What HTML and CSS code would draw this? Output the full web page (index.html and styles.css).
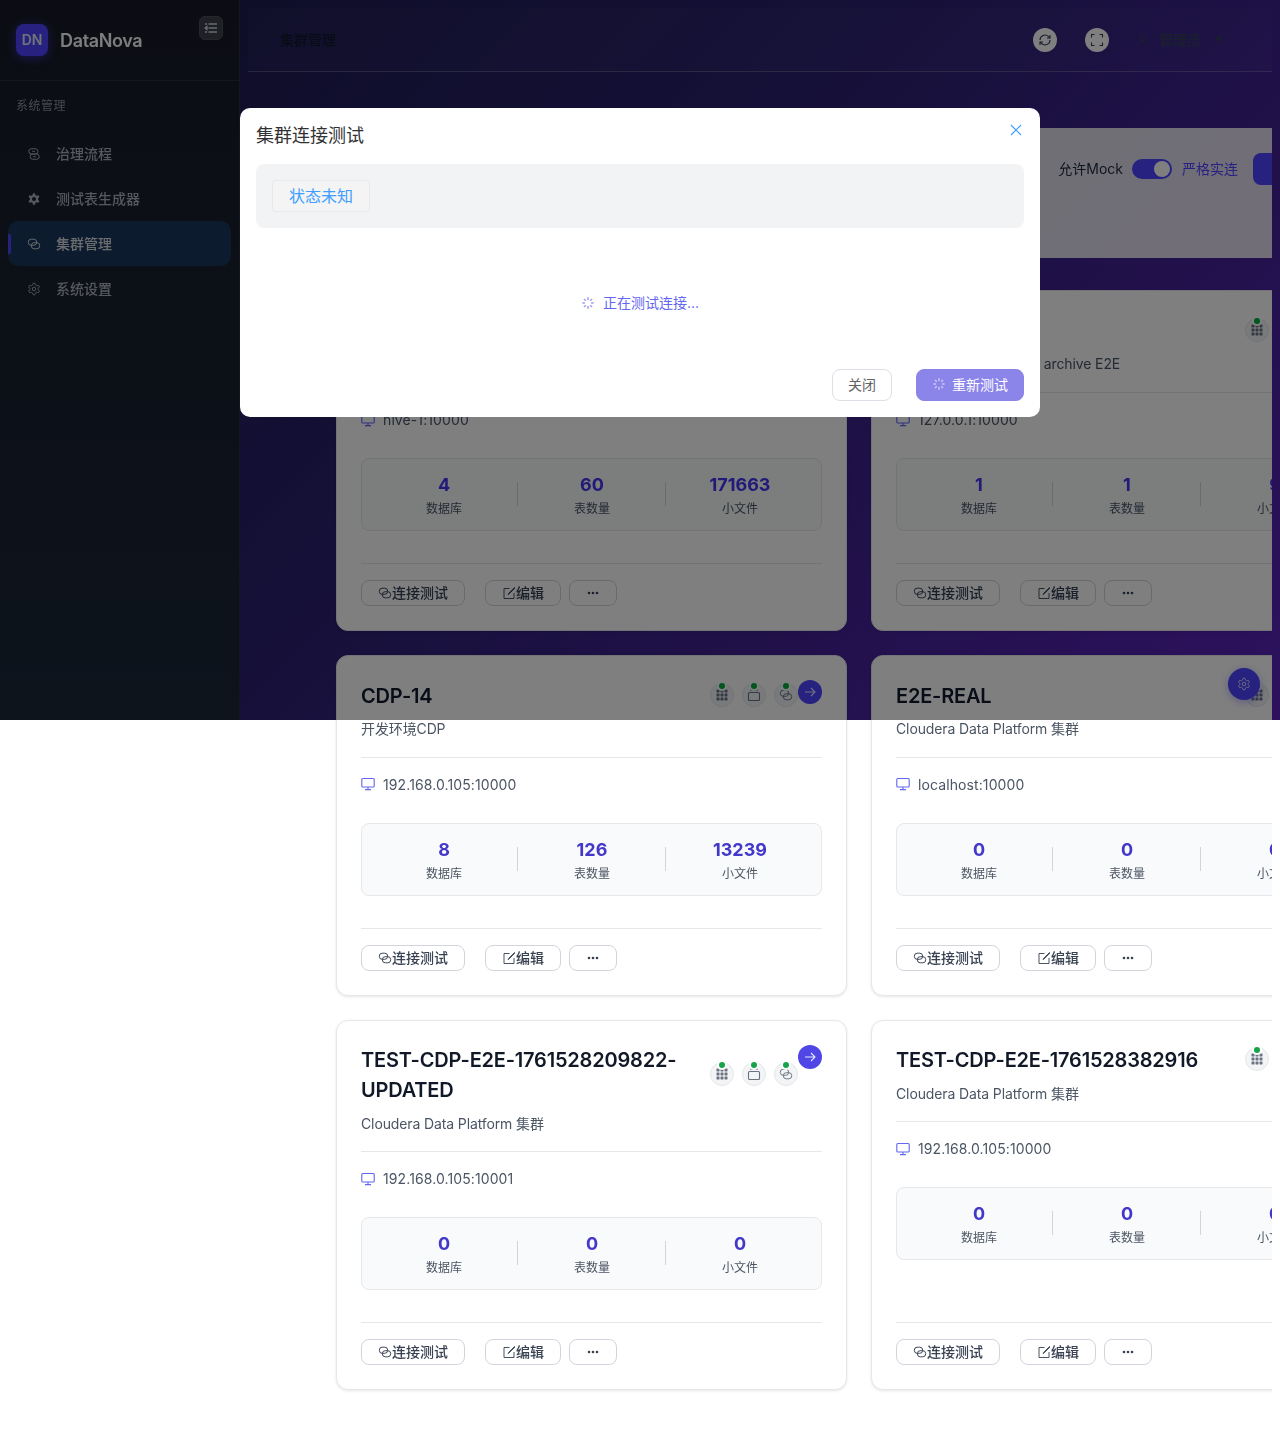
FILE: index.html
```html
<!DOCTYPE html>
<html lang="zh-CN">
<head>
    <meta charset="UTF-8">
    <meta name="viewport" content="width=device-width, initial-scale=1.0">
    <title>集群管理 - DataNova</title>
    <link rel="stylesheet" href="styles.css">
</head>
<body>
    <svg class="defs" width="0" height="0">
        <symbol id="i-link" viewBox="0 0 16 16" fill="none" stroke="currentColor" stroke-width="1.1">
            <rect x="1.500" y="2.500" width="9.500" height="7" rx="3.300"/>
            <rect x="5" y="6.500" width="9.500" height="7" rx="3.300"/>
        </symbol>
        <symbol id="i-flow" viewBox="0 0 16 16" fill="none" stroke="currentColor" stroke-width="1.1">
            <rect x="2" y="2" width="10.500" height="6" rx="3"/>
            <rect x="3.500" y="8" width="10.500" height="6" rx="3"/>
            <path d="M6 5h3M7 11h3"/>
        </symbol>
        <symbol id="i-gear-fill" viewBox="0 0 24 24">
            <path fill="currentColor" fill-rule="evenodd" d="M12.22 2h-.44a2 2 0 0 0-2 2v.18a2 2 0 0 1-1 1.73l-.43.25a2 2 0 0 1-2 0l-.15-.08a2 2 0 0 0-2.73.73l-.22.38a2 2 0 0 0 .73 2.73l.15.1a2 2 0 0 1 1 1.72v.51a2 2 0 0 1-1 1.74l-.15.09a2 2 0 0 0-.73 2.73l.22.38a2 2 0 0 0 2.73.73l.15-.08a2 2 0 0 1 2 0l.43.25a2 2 0 0 1 1 1.73V20a2 2 0 0 0 2 2h.44a2 2 0 0 0 2-2v-.18a2 2 0 0 1 1-1.73l.43-.25a2 2 0 0 1 2 0l.15.08a2 2 0 0 0 2.73-.73l.22-.39a2 2 0 0 0-.73-2.73l-.15-.08a2 2 0 0 1-1-1.74v-.5a2 2 0 0 1 1-1.74l.15-.09a2 2 0 0 0 .73-2.73l-.22-.38a2 2 0 0 0-2.73-.73l-.15.08a2 2 0 0 1-2 0l-.43-.25a2 2 0 0 1-1-1.73V4a2 2 0 0 0-2-2zM12 8.500a3.500 3.500 0 1 1 0 7 3.500 3.500 0 0 1 0-7z"/>
        </symbol>
        <symbol id="i-gear" viewBox="0 0 24 24" fill="none" stroke="currentColor" stroke-width="1.6">
            <path d="M12.22 2h-.44a2 2 0 0 0-2 2v.18a2 2 0 0 1-1 1.73l-.43.25a2 2 0 0 1-2 0l-.15-.08a2 2 0 0 0-2.73.73l-.22.38a2 2 0 0 0 .73 2.73l.15.1a2 2 0 0 1 1 1.72v.51a2 2 0 0 1-1 1.74l-.15.09a2 2 0 0 0-.73 2.73l.22.38a2 2 0 0 0 2.73.73l.15-.08a2 2 0 0 1 2 0l.43.25a2 2 0 0 1 1 1.73V20a2 2 0 0 0 2 2h.44a2 2 0 0 0 2-2v-.18a2 2 0 0 1 1-1.73l.43-.25a2 2 0 0 1 2 0l.15.08a2 2 0 0 0 2.73-.73l.22-.39a2 2 0 0 0-.73-2.73l-.15-.08a2 2 0 0 1-1-1.74v-.5a2 2 0 0 1 1-1.74l.15-.09a2 2 0 0 0 .73-2.73l-.22-.38a2 2 0 0 0-2.73-.73l-.15.08a2 2 0 0 1-2 0l-.43-.25a2 2 0 0 1-1-1.73V4a2 2 0 0 0-2-2z"/>
            <circle cx="12" cy="12" r="3"/>
        </symbol>
        <symbol id="i-grid" viewBox="0 0 14 14" fill="currentColor">
            <rect x="1.500" y="1.500" width="3" height="3" rx=".4"/><rect x="5.500" y="1.500" width="3" height="3" rx=".4"/><rect x="9.500" y="1.500" width="3" height="3" rx=".4"/>
            <rect x="1.500" y="5.500" width="3" height="3" rx=".4"/><rect x="5.500" y="5.500" width="3" height="3" rx=".4"/><rect x="9.500" y="5.500" width="3" height="3" rx=".4"/>
            <rect x="1.500" y="9.500" width="3" height="3" rx=".4"/><rect x="5.500" y="9.500" width="3" height="3" rx=".4"/><rect x="9.500" y="9.500" width="3" height="3" rx=".4"/>
        </symbol>
        <symbol id="i-box" viewBox="0 0 14 14" fill="none" stroke="currentColor" stroke-width="1.1">
            <rect x="1.500" y="4.500" width="11" height="8" rx="1"/>
            <path d="M3 2h8"/>
        </symbol>
        <symbol id="i-monitor" viewBox="0 0 14 14" fill="none" stroke="currentColor" stroke-width="1.1">
            <rect x=".8" y="1.500" width="12.400" height="8.500" rx="1"/>
            <path d="M7 10v2.400M4 12.600h6"/>
        </symbol>
        <symbol id="i-edit" viewBox="0 0 14 14" fill="none" stroke="currentColor" stroke-width=".9">
            <path d="M7.500 2.500H2v10h10V7"/>
            <path d="M12.500 1.500 6.500 7.500 6 8.500l1-.5 6-6z"/>
        </symbol>
        <symbol id="i-more" viewBox="0 0 14 14" fill="currentColor">
            <circle cx="3" cy="7" r="1.300"/><circle cx="7" cy="7" r="1.300"/><circle cx="11" cy="7" r="1.300"/>
        </symbol>
        <symbol id="i-arrow" viewBox="0 0 14 14" fill="none" stroke="currentColor" stroke-width="1.1">
            <path d="M2 7h10M8 3l4 4-4 4"/>
        </symbol>
        <symbol id="i-spin" viewBox="0 0 16 16" fill="none" stroke="currentColor" stroke-width="1.800">
            <path d="M8 1.500v3M8 11.500v3M1.500 8h3M11.500 8h3M3.400 3.400l2.100 2.100M10.500 10.500l2.100 2.100M3.400 12.600l2.100-2.100M10.500 5.500l2.100-2.100"/>
        </symbol>
    </svg>

    <div class="app">
        <aside class="sidebar">
            <div class="brand">
                <div class="logo">DN</div>
                <span class="brand_name">DataNova</span>
                <button class="fold">
                    <svg width="14" height="14" viewBox="0 0 14 14" fill="none" stroke="currentColor" stroke-width="1.3"><path d="M4.500 3H13M4.500 7H13M4.500 11H13"/><path d="M1 3h2M1 11h2"/><path d="M3 5.600 1 7l2 1.400z" fill="currentColor"/></svg>
                </button>
            </div>
            <div class="menu_title">系统管理</div>
            <ul class="menu">
                <li><svg class="menu_icon"><use href="#i-flow"/></svg>治理流程</li>
                <li><svg class="menu_icon"><use href="#i-gear-fill"/></svg>测试表生成器</li>
                <li class="active"><svg class="menu_icon"><use href="#i-link"/></svg>集群管理</li>
                <li><svg class="menu_icon"><use href="#i-gear"/></svg>系统设置</li>
            </ul>
        </aside>

        <main class="main">
            <header class="topbar">
                <h1 class="page_title">集群管理</h1>
                <div class="top_actions">
                    <button class="round">
                        <svg width="14" height="14" viewBox="0 0 14 14" fill="none" stroke="currentColor" stroke-width="1.1"><path d="M2 7a5 5 0 0 1 8.600-3.400L12 5M12 7a5 5 0 0 1-8.600 3.400L2 9"/><path d="M12 2v3H9M2 12V9h3"/></svg>
                    </button>
                    <button class="round">
                        <svg width="14" height="14" viewBox="0 0 14 14" fill="none" stroke="currentColor" stroke-width="1.1"><path d="M1.500 4.500V1.500h3M9.500 1.500h3v3M12.500 9.500v3h-3M4.500 12.500h-3v-3"/></svg>
                    </button>
                    <div class="user">
                        <svg width="14" height="14" viewBox="0 0 14 14" fill="none" stroke="currentColor" stroke-width="1"><circle cx="7" cy="4.500" r="3"/><path d="M1.500 13c0-3 2.400-4.800 5.500-4.800s5.500 1.800 5.500 4.800"/></svg>
                        <span>管理员</span>
                        <i class="caret"></i>
                    </div>
                </div>
            </header>

            <div class="content">
                <section class="panel">
                    <div class="tools">
                        <span class="mock_label">允许Mock</span>
                        <span class="switch"><i></i></span>
                        <span class="strict">严格实连</span>
                        <button class="add_btn">+ 添加集群</button>
                    </div>
                </section>

                <div class="cards">
                    <article class="card">
                        <div class="card_head">
                            <div class="card_info">
                                <h3 class="card_title">HIVE-1</h3>
                                <p class="card_desc">Hive 集群</p>
                            </div>
                            <div class="dots">
                                <span class="dot"><svg><use href="#i-grid"/></svg></span>
                                <span class="dot"><svg><use href="#i-box"/></svg></span>
                                <span class="dot"><svg><use href="#i-link"/></svg></span>
                            </div>
                            <button class="go"><svg><use href="#i-arrow"/></svg></button>
                        </div>
                        <div class="host"><svg><use href="#i-monitor"/></svg>hive-1:10000</div>
                        <div class="stats">
                            <div class="stat"><b>4</b><span>数据库</span></div>
                            <div class="stat"><b>60</b><span>表数量</span></div>
                            <div class="stat"><b>171663</b><span>小文件</span></div>
                        </div>
                        <div class="card_foot">
                            <button class="btn btn_test"><svg><use href="#i-link"/></svg>连接测试</button>
                            <button class="btn"><svg><use href="#i-edit"/></svg>编辑</button>
                            <button class="btn"><svg><use href="#i-more"/></svg></button>
                        </div>
                    </article>

                    <article class="card">
                        <div class="card_head">
                            <div class="card_info">
                                <h3 class="card_title">ARCHIVE-E2E</h3>
                                <p class="card_desc">Hive small file reviews archive E2E</p>
                            </div>
                            <div class="dots">
                                <span class="dot"><svg><use href="#i-grid"/></svg></span>
                                <span class="dot"><svg><use href="#i-box"/></svg></span>
                                <span class="dot"><svg><use href="#i-link"/></svg></span>
                            </div>
                            <button class="go"><svg><use href="#i-arrow"/></svg></button>
                        </div>
                        <div class="host"><svg><use href="#i-monitor"/></svg>127.0.0.1:10000</div>
                        <div class="stats">
                            <div class="stat"><b>1</b><span>数据库</span></div>
                            <div class="stat"><b>1</b><span>表数量</span></div>
                            <div class="stat"><b>9</b><span>小文件</span></div>
                        </div>
                        <div class="card_foot">
                            <button class="btn btn_test"><svg><use href="#i-link"/></svg>连接测试</button>
                            <button class="btn"><svg><use href="#i-edit"/></svg>编辑</button>
                            <button class="btn"><svg><use href="#i-more"/></svg></button>
                        </div>
                    </article>

                    <article class="card">
                        <div class="card_head">
                            <div class="card_info">
                                <h3 class="card_title">CDP-14</h3>
                                <p class="card_desc">开发环境CDP</p>
                            </div>
                            <div class="dots">
                                <span class="dot"><svg><use href="#i-grid"/></svg></span>
                                <span class="dot"><svg><use href="#i-box"/></svg></span>
                                <span class="dot"><svg><use href="#i-link"/></svg></span>
                            </div>
                            <button class="go"><svg><use href="#i-arrow"/></svg></button>
                        </div>
                        <div class="host"><svg><use href="#i-monitor"/></svg>192.168.0.105:10000</div>
                        <div class="stats">
                            <div class="stat"><b>8</b><span>数据库</span></div>
                            <div class="stat"><b>126</b><span>表数量</span></div>
                            <div class="stat"><b>13239</b><span>小文件</span></div>
                        </div>
                        <div class="card_foot">
                            <button class="btn btn_test"><svg><use href="#i-link"/></svg>连接测试</button>
                            <button class="btn"><svg><use href="#i-edit"/></svg>编辑</button>
                            <button class="btn"><svg><use href="#i-more"/></svg></button>
                        </div>
                    </article>

                    <article class="card">
                        <div class="card_head">
                            <div class="card_info">
                                <h3 class="card_title">E2E-REAL</h3>
                                <p class="card_desc">Cloudera Data Platform 集群</p>
                            </div>
                            <div class="dots">
                                <span class="dot"><svg><use href="#i-grid"/></svg></span>
                                <span class="dot"><svg><use href="#i-box"/></svg></span>
                                <span class="dot"><svg><use href="#i-link"/></svg></span>
                            </div>
                            <button class="go"><svg><use href="#i-arrow"/></svg></button>
                        </div>
                        <div class="host"><svg><use href="#i-monitor"/></svg>localhost:10000</div>
                        <div class="stats">
                            <div class="stat"><b>0</b><span>数据库</span></div>
                            <div class="stat"><b>0</b><span>表数量</span></div>
                            <div class="stat"><b>0</b><span>小文件</span></div>
                        </div>
                        <div class="card_foot">
                            <button class="btn btn_test"><svg><use href="#i-link"/></svg>连接测试</button>
                            <button class="btn"><svg><use href="#i-edit"/></svg>编辑</button>
                            <button class="btn"><svg><use href="#i-more"/></svg></button>
                        </div>
                    </article>

                    <article class="card">
                        <div class="card_head">
                            <div class="card_info">
                                <h3 class="card_title">TEST-CDP-E2E-1761528209822-UPDATED</h3>
                                <p class="card_desc">Cloudera Data Platform 集群</p>
                            </div>
                            <div class="dots">
                                <span class="dot"><svg><use href="#i-grid"/></svg></span>
                                <span class="dot"><svg><use href="#i-box"/></svg></span>
                                <span class="dot"><svg><use href="#i-link"/></svg></span>
                            </div>
                            <button class="go"><svg><use href="#i-arrow"/></svg></button>
                        </div>
                        <div class="host"><svg><use href="#i-monitor"/></svg>192.168.0.105:10001</div>
                        <div class="stats">
                            <div class="stat"><b>0</b><span>数据库</span></div>
                            <div class="stat"><b>0</b><span>表数量</span></div>
                            <div class="stat"><b>0</b><span>小文件</span></div>
                        </div>
                        <div class="card_foot">
                            <button class="btn btn_test"><svg><use href="#i-link"/></svg>连接测试</button>
                            <button class="btn"><svg><use href="#i-edit"/></svg>编辑</button>
                            <button class="btn"><svg><use href="#i-more"/></svg></button>
                        </div>
                    </article>

                    <article class="card">
                        <div class="card_head">
                            <div class="card_info">
                                <h3 class="card_title">TEST-CDP-E2E-1761528382916</h3>
                                <p class="card_desc">Cloudera Data Platform 集群</p>
                            </div>
                            <div class="dots">
                                <span class="dot"><svg><use href="#i-grid"/></svg></span>
                                <span class="dot"><svg><use href="#i-box"/></svg></span>
                                <span class="dot"><svg><use href="#i-link"/></svg></span>
                            </div>
                            <button class="go"><svg><use href="#i-arrow"/></svg></button>
                        </div>
                        <div class="host"><svg><use href="#i-monitor"/></svg>192.168.0.105:10000</div>
                        <div class="stats">
                            <div class="stat"><b>0</b><span>数据库</span></div>
                            <div class="stat"><b>0</b><span>表数量</span></div>
                            <div class="stat"><b>0</b><span>小文件</span></div>
                        </div>
                        <div class="card_foot">
                            <button class="btn btn_test"><svg><use href="#i-link"/></svg>连接测试</button>
                            <button class="btn"><svg><use href="#i-edit"/></svg>编辑</button>
                            <button class="btn"><svg><use href="#i-more"/></svg></button>
                        </div>
                    </article>
                </div>
            </div>
        </main>

        <button class="float_btn"><svg><use href="#i-gear"/></svg></button>
    </div>

    <div class="overlay">
        <div class="dialog">
            <div class="dialog_head">
                <span class="dialog_title">集群连接测试</span>
                <svg class="dialog_close" width="12" height="12" viewBox="0 0 12 12" fill="none" stroke="currentColor" stroke-width="1.2"><path d="M1 1l10 10M11 1 1 11"/></svg>
            </div>
            <div class="status_bar"><span class="status_tag">状态未知</span></div>
            <div class="testing"><svg class="testing_spin"><use href="#i-spin"/></svg>正在测试连接...</div>
            <div class="dialog_foot">
                <button class="dlg_btn">关闭</button>
                <button class="dlg_btn dlg_primary"><svg><use href="#i-spin"/></svg>重新测试</button>
            </div>
        </div>
    </div>
</body>
</html>
```

FILE: styles.css
```css
*{margin:0;padding:0;box-sizing:border-box;}
html,body{width:100%;height:1454px;}
body{
    background:#fff;
    font-family:Inter,"Noto Sans CJK SC",sans-serif;
    font-size:14px;
    line-height:1.5;
    color:#111827;
    overflow:hidden;
}
button{font-family:inherit;}
ul{list-style:none;}
.defs{position:absolute;}

/* 外层只有一屏高,卡片会溢出到白色区域 */
.app{
    display:flex;
    height:720px;
    background:linear-gradient(135deg,#1a1a3c 0%,#2a2360 45%,#54289f 100%);
}

/* 侧边栏 */
.sidebar{
    flex:0 0 240px;
    background:linear-gradient(180deg,#191b25,#1d2835);
    border-right:1px solid #2a2e38;
}
.brand{
    display:flex;
    align-items:flex-start;
    height:81px;
    padding:24px 16px 0;
    border-bottom:1px solid #2d3038;
}
.logo{
    width:32px;
    height:32px;
    border-radius:8px;
    background:#4f46e5;
    color:#e5e7eb;
    font-size:14px;
    font-weight:600;
    line-height:32px;
    text-align:center;
    box-shadow:0 2px 10px rgba(79,70,229,.5);
}
.brand_name{
    margin-left:12px;
    padding-top:1px;
    font-size:18px;
    font-weight:600;
    line-height:32px;
    letter-spacing:-.35px;
    color:#f9fafb;
}
.fold{
    display:flex;
    align-items:center;
    justify-content:center;
    width:24px;
    height:24px;
    margin:-8px 0 0 auto;
    background:#3e4148;
    border:1px solid #4c4f56;
    border-radius:6px;
    color:#d1d5db;
}
.menu_title{
    padding:16px 16px 0;
    height:56px;
    font-size:12px;
    letter-spacing:.5px;
    color:#8e939c;
}
.menu{padding:0 8px;margin-top:-6px;}
.menu li{
    position:relative;
    display:flex;
    align-items:center;
    height:45px;
    border-radius:10px;
    font-weight:500;
    color:#adb1b9;
}
.menu_icon{
    width:14px;
    height:14px;
    margin:0 15px 0 19px;
}
.menu .active{
    background:#1f3552;
    color:#d7dade;
}
.menu .active::before{
    content:"";
    position:absolute;
    left:0;
    top:13px;
    width:3px;
    height:20px;
    background:#4f46e5;
    border-radius:0 2px 2px 0;
}

/* 主区域 */
.main{
    flex:1;
    min-width:0;
    margin:8px;
    overflow-x:clip;
}
.topbar{
    display:flex;
    align-items:center;
    height:64px;
    padding:0 32px;
    border-bottom:1px solid rgba(255,255,255,.2);
    background:rgba(255,255,255,.02);
}
.page_title{
    font-size:14px;
    font-weight:500;
    color:#111827;
}
.top_actions{
    display:flex;
    align-items:center;
    margin-left:auto;
    padding-right:17px;
}
.round{
    display:flex;
    align-items:center;
    justify-content:center;
    width:24px;
    height:24px;
    margin-right:28px;
    border:0;
    border-radius:50%;
    background:#fff;
    color:#374151;
}
.round + .round{margin-right:27px;}
.user{
    display:flex;
    align-items:center;
    color:#374151;
    font-weight:500;
}
.user span{margin:0 14px 0 9px;}
.caret{
    width:0;
    height:0;
    border-left:4px solid transparent;
    border-right:4px solid transparent;
    border-top:5px solid #374151;
}

.content{margin:56px 0 0 88px;}
.panel{
    width:1046px;
    height:130px;
    padding:25px 24px;
    background:rgba(255,255,255,.85);
}
.tools{
    display:flex;
    align-items:center;
    justify-content:flex-end;
}
.mock_label{padding-bottom:2px;color:#1f2937;}
.switch{
    display:block;
    width:40px;
    height:20px;
    margin:0 10px 0 9px;
    padding:2px;
    border-radius:10px;
    background:#4f46e5;
}
.switch i{
    display:block;
    width:16px;
    height:16px;
    margin-left:auto;
    border-radius:50%;
    background:#fff;
}
.strict{padding-bottom:2px;color:#4f46e5;}
.add_btn{
    width:105px;
    height:32px;
    margin-left:15px;
    border:0;
    border-radius:8px;
    background:#4f46e5;
    color:#fff;
    font-size:14px;
}

/* 卡片 */
.cards{
    display:grid;
    grid-template-columns:511px 511px;
    gap:24px;
    width:1046px;
    margin-top:32.45px;
}
.card{
    position:relative;
    display:flex;
    flex-direction:column;
    padding:24px;
    background:#fff;
    border:1px solid #e5e7eb;
    border-radius:12px;
    box-shadow:0 1px 3px rgba(0,0,0,.1);
}
.card_head{
    display:flex;
    align-items:center;
    padding-bottom:17.6px;
    border-bottom:1px solid #e5e7eb;
}
.card_info{flex:1;min-width:0;padding-right:18px;}
.card_title{
    padding-top:.6px;
    font-size:20px;
    font-weight:600;
    line-height:30px;
    letter-spacing:-.2px;
    color:#111827;
}
.card_desc{
    margin-top:7.4px;
    letter-spacing:-.12px;
    color:#4b5563;
}
.dots{
    display:flex;
    gap:8px;
    padding:0 24px 30px 0;
    flex-shrink:0;
}
.dot{
    position:relative;
    display:flex;
    align-items:center;
    justify-content:center;
    width:24px;
    height:24px;
    border-radius:50%;
    background:#f3f4f6;
    border:1px solid #e5e7eb;
    color:#6b7280;
}
.dot svg{width:14px;height:14px;}
.dot::after{
    content:"";
    position:absolute;
    top:-1px;
    left:50%;
    width:6px;
    height:6px;
    margin-left:-3px;
    border-radius:50%;
    background:#16a34a;
    box-shadow:0 0 0 2px #fff;
}
.go{
    position:absolute;
    top:24px;
    right:24px;
    display:flex;
    align-items:center;
    justify-content:center;
    width:24px;
    height:24px;
    border:0;
    border-radius:50%;
    background:#4f46e5;
    color:#e0e7ff;
}
.go svg{width:14px;height:14px;}

.host{
    display:flex;
    align-items:center;
    margin-top:16px;
    letter-spacing:.1px;
    color:#4b5563;
}
.host svg{
    width:14px;
    height:14px;
    margin-right:8px;
    color:#6366f1;
}
.stats{
    display:flex;
    margin:28px 0 32px;
    padding:12px 8px;
    background:#f9fafb;
    border:1px solid #e5e7eb;
    border-radius:8px;
}
.stat{
    position:relative;
    flex:0 0 148px;
    display:flex;
    flex-direction:column;
    align-items:center;
}
.stat:not(:last-child)::after{
    content:"";
    position:absolute;
    right:0;
    top:11px;
    width:1px;
    height:24px;
    background:#d1d5db;
}
.stat b{
    font-size:18px;
    font-weight:700;
    line-height:28px;
    color:#4338ca;
}
.stat span{
    margin-top:1px;
    font-size:12px;
    line-height:18px;
    color:#4b5563;
}
.card_foot{
    display:flex;
    gap:8px;
    margin-top:auto;
    padding-top:16px;
    border-top:1px solid #e5e7eb;
}
.btn{
    display:flex;
    align-items:center;
    height:26px;
    padding:0 16px 2px;
    background:#fff;
    border:1px solid #d1d5db;
    border-radius:8px;
    color:#374151;
    font-size:14px;
    font-weight:500;
}
.btn svg{width:14px;height:14px;margin-top:2px;}
.btn_test{margin-right:12px;}

.float_btn{
    position:absolute;
    left:1228px;
    top:668px;
    display:flex;
    align-items:center;
    justify-content:center;
    width:32px;
    height:32px;
    border:0;
    border-radius:50%;
    background:#4f46e5;
    color:#e0e7ff;
    box-shadow:0 2px 8px rgba(79,70,229,.4);
}
.float_btn svg{width:14px;height:14px;}

/* 弹窗遮罩,也只有一屏高 */
.overlay{
    position:absolute;
    top:0;
    left:0;
    width:100%;
    height:720px;
    padding-top:108px;
    background:rgba(0,0,0,.5);
    backdrop-filter:blur(.5px) saturate(1.3);
}
.dialog{
    width:800px;
    height:309px;
    margin:0 auto;
    padding:16px;
    background:#fff;
    border-radius:10px;
    color:#303133;
}
.dialog_head{
    display:flex;
    justify-content:space-between;
    height:40px;
}
.dialog_title{
    font-size:18px;
    line-height:23px;
}
.dialog_close{
    margin:0 2px 0 0;
    color:#409eff;
}
.status_bar{
    height:64px;
    padding:16px;
    background:#f2f3f5;
    border-radius:8px;
}
.status_tag{
    display:block;
    width:98px;
    height:32px;
    background:#f4f4f5;
    border:1px solid #e9e9eb;
    border-radius:4px;
    color:#409eff;
    font-size:16px;
    line-height:30px;
    text-align:center;
}
.testing{
    display:flex;
    align-items:center;
    justify-content:center;
    height:141px;
    padding-top:8px;
    color:#6366f1;
}
.testing_spin{
    width:14px;
    height:14px;
    margin-right:8px;
    color:#a5a0f5;
}
.dialog_foot{
    display:flex;
    justify-content:flex-end;
    gap:24px;
}
.dlg_btn{
    display:flex;
    align-items:center;
    justify-content:center;
    width:60px;
    height:32px;
    padding-bottom:2px;
    background:#fff;
    border:1px solid #dcdfe6;
    border-radius:8px;
    color:#606266;
    font-size:14px;
}
.dlg_primary{
    width:108px;
    background:#8b85ea;
    border-color:#8b85ea;
    color:#fff;
}
.dlg_primary svg{
    width:14px;
    height:14px;
    margin-right:6px;
    color:#c9c6f7;
}
```
